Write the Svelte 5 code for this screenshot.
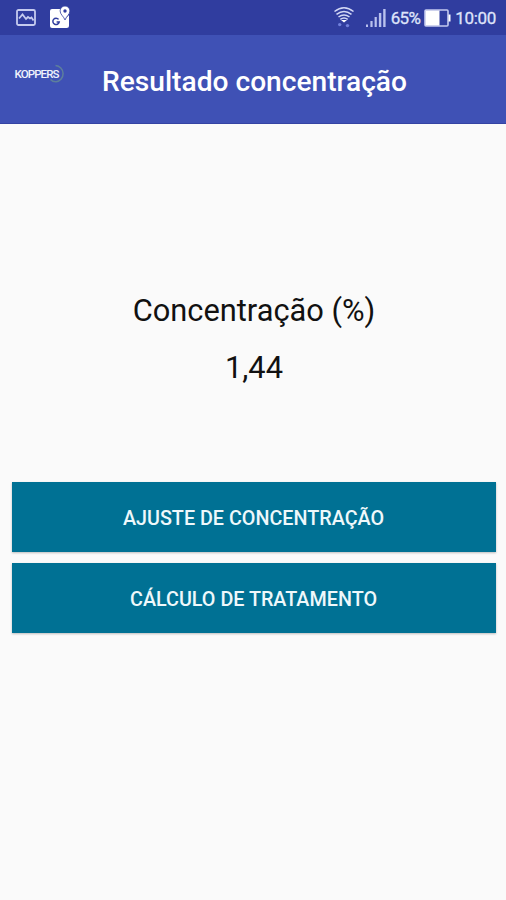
<script>
	let concentration = 1.44;

	const actions = ['Ajuste de concentração', 'Cálculo de tratamento'];

	$: formatted = concentration.toFixed(2).replace('.', ',');
</script>

<div class="screen">
	<div class="status">
		<svg class="picture" width="20" height="17" viewBox="0 0 20 17">
			<rect x="1" y="1" width="18" height="15" rx="1.5" />
			<path d="M3 9.500 L6.500 5.500 L10 10 L12 8 L14 9.500 L15.500 8.500 L17.500 11.500" />
		</svg>
		<svg class="maps" width="22" height="24" viewBox="0 0 22 24">
			<path class="fill" d="M3 4 H12 Q12 9 16 14 L20 10 V20.5 Q20 23 17.5 23 H3 Q1 23 1 21 V6 Q1 4 3 4 Z" />
			<path class="ring" d="M9.6 14.4 A3.2 3.2 0 1 0 10.2 17 H7.6" />
			<path class="pin" d="M16 1 a4.900 4.900 0 0 1 4.900 4.900 C20.900 9.500 17.500 11 16 15 C14.500 11 11.100 9.500 11.100 5.900 A4.900 4.900 0 0 1 16 1 Z" />
			<circle class="hole" cx="16" cy="6" r="1.700" />
		</svg>

		<div class="right">
			<svg class="wifi" width="22" height="22" viewBox="0 0 22 22">
				<path d="M1.500 5.500 Q11 -2 20.500 5.500 M3.500 8.300 Q11 2.500 18.500 8.300 M5.500 11 Q11 6.800 16.500 11" />
				<path d="M7.300 13.400 Q11 10.600 14.700 13.400" />
				<path class="fill" d="M8 14 H14 L11 16.600 Z" />
				<circle class="dot" cx="6.700" cy="18.600" r="1.700" />
				<circle class="dot" cx="14.500" cy="19.600" r="1.700" />
			</svg>
			<svg class="signal" width="20" height="18" viewBox="0 0 20 18">
				<path d="M0 15.500 h2 v2.500 h-2 z M4.400 12 h2.200 v6 h-2.200 z M8.600 8 h2.200 v10 h-2.200 z M12.900 4 h2.400 v14 h-2.400 z M17.200 0 h2.400 v18 h-2.400 z" />
			</svg>
			<span class="percent">65%</span>
			<svg class="battery" width="27" height="18" viewBox="0 0 27 18">
				<rect class="outline" x="1" y="1" width="23" height="16" rx="1" />
				<rect class="level" x="1.500" y="1.500" width="14" height="15" />
				<rect class="level" x="24.500" y="5.500" width="2" height="7" />
			</svg>
			<span class="clock">10:00</span>
		</div>
	</div>

	<header>
		<svg class="logo" width="52" height="24" viewBox="0 0 52 24">
			<path class="arc" d="M41.500 3.500 A8.200 8.200 0 0 1 42 19.800 Q38.500 19.800 36.500 17.500" />
			<text x="0.500" y="15.500">KOPPERS</text>
		</svg>
		<h1>Resultado concentração</h1>
	</header>

	<main>
		<p class="label">Concentração (%)</p>
		<p class="value">{formatted}</p>

		<div class="actions">
			{#each actions as action}
				<button>{action}</button>
			{/each}
		</div>
	</main>
</div>

<style>
	:global(body) {
		margin: 0;
		background: #fafafa;
	}

	.screen {
		height: 900px;
		overflow: hidden;
		background: #fafafa;
		font-family: Roboto, 'Liberation Sans', sans-serif;
	}

	svg {
		display: block;
		fill: none;
		flex: none;
		overflow: visible;
	}

	.status {
		display: flex;
		align-items: center;
		box-sizing: border-box;
		height: 35px;
		padding: 0 10px 0 16px;
		background: #303d9f;
		color: #dfe3fa;
	}

	.picture {
		margin-top: -1px;
		stroke: #c5cbef;
		stroke-width: 1.8;
	}

	.maps {
		margin: -2px 0 0 13px;
	}

	.maps .fill,
	.maps .pin {
		fill: #fff;
	}

	.maps .pin {
		stroke: #303d9f;
		stroke-width: 0.8;
	}

	.maps .ring {
		stroke: #303d9f;
		stroke-width: 1.5;
	}

	.maps .hole {
		fill: #303d9f;
	}

	.right {
		display: flex;
		align-items: center;
		margin-left: auto;
	}

	.wifi {
		margin-top: -1px;
		stroke: #d3d8f5;
		stroke-width: 1.5;
	}

	.wifi .fill {
		fill: #fff;
		stroke: none;
	}

	.wifi .dot {
		fill: #7180dc;
		stroke: none;
	}

	.signal {
		margin-left: 11px;
		fill: #b9c1ee;
	}

	.percent,
	.clock {
		font-size: 17px;
		line-height: 20px;
		letter-spacing: -0.3px;
		-webkit-text-stroke: 0.3px;
	}

	.percent {
		margin-left: 5px;
		letter-spacing: -0.7px;
	}

	.battery {
		margin: 0 4px;
	}

	.battery .outline {
		stroke: #c3c9ef;
		stroke-width: 1.6;
	}

	.battery .level {
		fill: #fff;
	}

	header {
		display: flex;
		align-items: flex-start;
		box-sizing: border-box;
		height: 89px;
		padding: 27px 0 0 14px;
		background: #3f51b5;
		border-bottom: 1px solid #3443a3;
	}

	.logo text {
		fill: #f0f2fc;
		font-size: 11.5px;
		font-weight: 500;
		letter-spacing: -0.9px;
	}

	.logo .arc {
		stroke: #5d7f9c;
		stroke-width: 1.5;
	}

	h1 {
		margin: 3px 0 0 36px;
		color: #fff;
		font-size: 28.15px;
		font-weight: 500;
		line-height: 34px;
		white-space: nowrap;
	}

	p {
		margin: 0;
		color: #111;
		font-size: 30.8px;
		line-height: 36px;
		text-align: center;
	}

	.label {
		padding-top: 169px;
		margin-left: 2px;
	}

	.value {
		margin-top: 21px;
		margin-left: 2px;
	}

	.actions {
		display: flex;
		flex-direction: column;
		gap: 11.2px;
		padding: 96.2px 10.5px 0 11.5px;
	}

	button {
		height: 70px;
		padding: 3px 0 0;
		border: 0;
		background: #007194;
		box-shadow: 0 1px 2px rgba(0, 0, 0, 0.25);
		color: #eef8fb;
		font: 500 19.75px/24px Roboto, 'Liberation Sans', sans-serif;
		text-transform: uppercase;
	}
</style>
